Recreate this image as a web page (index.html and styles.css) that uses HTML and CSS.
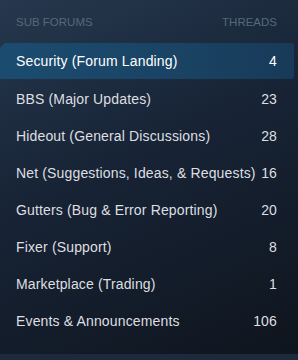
FILE: index.html
```html
<!DOCTYPE html>
<html>
<head>
<meta charset="utf-8">
<link rel="stylesheet" href="styles.css">
</head>
<body>
<div class="panel">
  <div class="head">
    <span>Sub Forums</span>
    <span>Threads</span>
  </div>
  <ul class="list">
    <li class="row active"><span class="name">Security (Forum Landing)</span><span class="num">4</span></li>
    <li class="row"><span class="name">BBS (Major Updates)</span><span class="num">23</span></li>
    <li class="row"><span class="name">Hideout (General Discussions)</span><span class="num">28</span></li>
    <li class="row"><span class="name">Net (Suggestions, Ideas, &amp; Requests)</span><span class="num">16</span></li>
    <li class="row"><span class="name">Gutters (Bug &amp; Error Reporting)</span><span class="num">20</span></li>
    <li class="row"><span class="name">Fixer (Support)</span><span class="num">8</span></li>
    <li class="row"><span class="name">Marketplace (Trading)</span><span class="num">1</span></li>
    <li class="row"><span class="name">Events &amp; Announcements</span><span class="num">106</span></li>
  </ul>
</div>
</body>
</html>
```
FILE: styles.css
```css
html, body {
  margin: 0;
  padding: 0;
}
body {
  width: 298px;
  height: 360px;
  background: #1c2a3c;
  font-family: "Liberation Sans", Arial, sans-serif;
  overflow: hidden;
}
.panel {
  height: 354px;
  box-sizing: border-box;
  background: linear-gradient(155deg, #26384e 0%, #172335 45%, #0f151e 100%);
  padding-top: 15px;
}
.head {
  display: flex;
  justify-content: space-between;
  padding: 0 21px 0 16px;
  font-size: 11.5px;
  line-height: 14px;
  text-transform: uppercase;
  color: #56687d;
  height: 28px;
}
.list {
  list-style: none;
  margin: 0;
  padding: 0;
}
.row {
  display: flex;
  justify-content: space-between;
  align-items: center;
  height: 37px;
  padding: 0 21px 0 16px;
  font-size: 14px;
  letter-spacing: 0.15px;
  color: #dedfe0;
}
.row.active {
  height: 36px;
  margin-bottom: 1px;
  margin-right: 4px;
  padding-right: 17px;
  color: #ffffff;
  background: linear-gradient(90deg, #1b4c70 0%, #1a4364 60%, #183a58 100%);
  border-radius: 0 3px 3px 0;
  clip-path: polygon(5px 0, 100% 0, 100% 100%, 0 100%, 0 5px);
}
```
